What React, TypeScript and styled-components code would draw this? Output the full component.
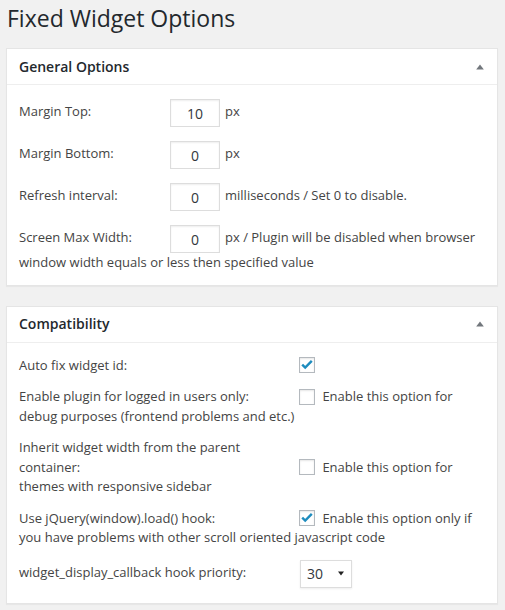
import React from "react";
import styled, { createGlobalStyle } from "styled-components";

const GlobalStyle = createGlobalStyle`
  html, body { margin: 0; padding: 0; background: #f1f1f1; }
  body {
    font-family: "Open Sans", "Liberation Sans", sans-serif;
    font-size: 13px;
    color: #444;
    line-height: 19.5px;
  }
`;

const Wrap = styled.div`
  padding: 0 7px 20px 6px;
`;

const Title = styled.h1`
  margin: 0;
  padding: 4px 0 0 1px;
  font-size: 23px;
  font-weight: 400;
  line-height: 29px;
  color: #23282d;
`;

const Panel = styled.section<{ $top: number }>`
  background: #fff;
  border: 1px solid #e5e5e5;
  box-shadow: 0 1px 1px rgba(0, 0, 0, 0.04);
  margin-top: ${(p) => p.$top}px;
`;

const Header = styled.div`
  display: flex;
  align-items: center;
  justify-content: space-between;
  height: 35px;
  padding: 0 13px 0 12px;
  border-bottom: 1px solid #eee;
  font-size: 14px;
  font-weight: 600;
  color: #23282d;
`;

const Inside = styled.div<{ $bottom: number }>`
  padding: 0 12px ${(p) => p.$bottom}px;
`;

const Row = styled.div<{ $gap: number }>`
  margin-top: ${(p) => p.$gap}px;
  line-height: 19.5px;
`;

const Label = styled.span<{ $w: number }>`
  display: inline-block;
  width: ${(p) => p.$w}px;
`;

const NumberInput = styled.input`
  display: inline-block;
  box-sizing: border-box;
  width: 50px;
  height: 28px;
  margin: 0 5px 0 0;
  padding: 0 5px;
  border: 1px solid #ddd;
  box-shadow: inset 0 1px 2px rgba(0, 0, 0, 0.07);
  background: #fff;
  font-family: "Open Sans", "Liberation Sans", sans-serif;
  font-size: 14px;
  color: #32373c;
  text-align: center;
  vertical-align: middle;
  outline: none;
`;

const CheckBox = styled.span`
  display: inline-flex;
  align-items: center;
  justify-content: center;
  box-sizing: border-box;
  width: 16px;
  height: 16px;
  margin: -2px 4px 0 0;
  border: 1px solid #b4b9be;
  background: #fff;
  box-shadow: inset 0 1px 2px rgba(0, 0, 0, 0.1);
  vertical-align: middle;
`;

const FakeSelect = styled.span`
  display: inline-flex;
  align-items: center;
  justify-content: space-between;
  box-sizing: border-box;
  width: 52px;
  height: 28px;
  margin-left: 1px;
  padding: 0 7px 0 6px;
  border: 1px solid #ddd;
  background: #fff;
  box-shadow: 0 1px 2px rgba(0, 0, 0, 0.07);
  font-size: 14px;
  color: #32373c;
  vertical-align: middle;
`;

const ToggleArrow = () => (
  <svg width="8" height="6" viewBox="0 0 8 6" aria-hidden="true">
    <path d="M4 0.5 L7.8 5.5 L0.2 5.5 Z" fill="#72777c" />
  </svg>
);

const DownArrow = () => (
  <svg width="6" height="5" viewBox="0 0 6 5" aria-hidden="true">
    <path d="M0 0.5 L6 0.5 L3 4.5 Z" fill="#222" />
  </svg>
);

const Check = ({ checked }: { checked: boolean }) => (
  <CheckBox role="checkbox" aria-checked={checked}>
    {checked && (
      <svg width="14" height="14" viewBox="0 0 14 14" aria-hidden="true">
        <path d="M2.2 6.6 L5.2 9.6 L11.8 2.8" fill="none" stroke="#1e8cbe" strokeWidth="2.4" />
      </svg>
    )}
  </CheckBox>
);

export default function App() {
  return (
    <>
      <GlobalStyle />
      <Wrap>
        <Title>Fixed Widget Options</Title>

        <Panel $top={15}>
          <Header>
            <span>General Options</span>
            <ToggleArrow />
          </Header>
          <Inside $bottom={12}>
            <Row $gap={14}>
              <Label $w={151}>Margin Top:</Label>
              <NumberInput readOnly defaultValue="10" />
              px
            </Row>
            <Row $gap={14}>
              <Label $w={151}>Margin Bottom:</Label>
              <NumberInput readOnly defaultValue="0" />
              px
            </Row>
            <Row $gap={14}>
              <Label $w={151}>Refresh interval:</Label>
              <NumberInput readOnly defaultValue="0" />
              milliseconds / Set 0 to disable.
            </Row>
            <Row $gap={14}>
              <Label $w={151}>Screen Max Width:</Label>
              <NumberInput readOnly defaultValue="0" />
              px / Plugin will be disabled when browser window width equals or less then specified value
            </Row>
          </Inside>
        </Panel>

        <Panel $top={20}>
          <Header>
            <span>Compatibility</span>
            <ToggleArrow />
          </Header>
          <Inside $bottom={15}>
            <Row $gap={13}>
              <Label $w={280}>Auto fix widget id:</Label>
              <Check checked />
            </Row>
            <Row $gap={12}>
              <Label $w={280}>Enable plugin for logged in users only:</Label>
              <Check checked={false} /> Enable this option for debug purposes (frontend problems and etc.)
            </Row>
            <Row $gap={12}>
              <Label $w={280}>Inherit widget width from the parent container:</Label>
              <Check checked={false} /> Enable this option for themes with responsive sidebar
            </Row>
            <Row $gap={12}>
              <Label $w={280}>Use jQuery(window).load() hook:</Label>
              <Check checked /> Enable this option only if you have problems with other scroll oriented javascript code
            </Row>
            <Row $gap={12}>
              <Label $w={280}>widget_display_callback hook priority:</Label>
              <FakeSelect role="listbox">
                <span>30</span>
                <DownArrow />
              </FakeSelect>
            </Row>
          </Inside>
        </Panel>
      </Wrap>
    </>
  );
}
